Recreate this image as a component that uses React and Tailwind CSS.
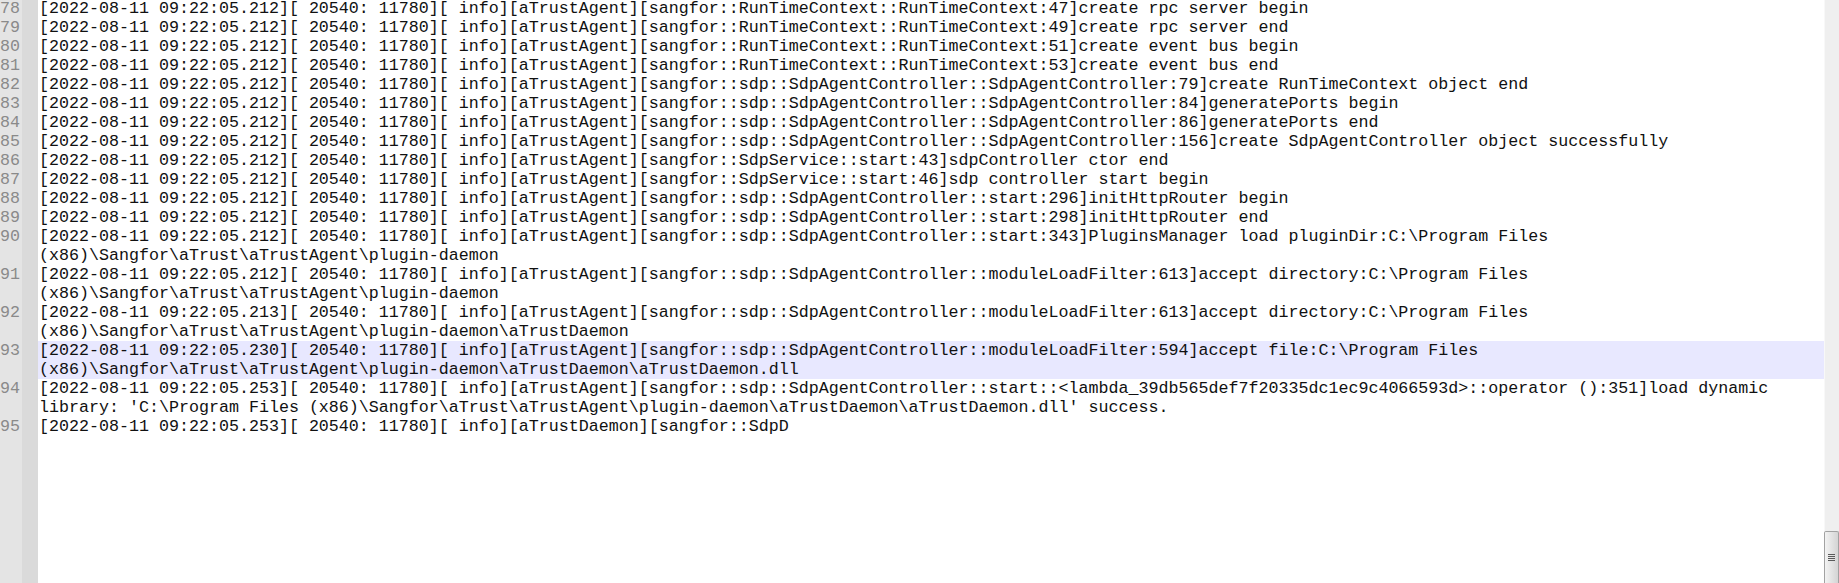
import React from "react";

const P = "[2022-08-11 09:22:05.";
const T = "][ 20540: 11780][ info][aTrustAgent]";

const lines = [
  { n: 78, rows: [P + "212" + T + "[sangfor::RunTimeContext::RunTimeContext:47]create rpc server begin"] },
  { n: 79, rows: [P + "212" + T + "[sangfor::RunTimeContext::RunTimeContext:49]create rpc server end"] },
  { n: 80, rows: [P + "212" + T + "[sangfor::RunTimeContext::RunTimeContext:51]create event bus begin"] },
  { n: 81, rows: [P + "212" + T + "[sangfor::RunTimeContext::RunTimeContext:53]create event bus end"] },
  { n: 82, rows: [P + "212" + T + "[sangfor::sdp::SdpAgentController::SdpAgentController:79]create RunTimeContext object end"] },
  { n: 83, rows: [P + "212" + T + "[sangfor::sdp::SdpAgentController::SdpAgentController:84]generatePorts begin"] },
  { n: 84, rows: [P + "212" + T + "[sangfor::sdp::SdpAgentController::SdpAgentController:86]generatePorts end"] },
  { n: 85, rows: [P + "212" + T + "[sangfor::sdp::SdpAgentController::SdpAgentController:156]create SdpAgentController object successfully"] },
  { n: 86, rows: [P + "212" + T + "[sangfor::SdpService::start:43]sdpController ctor end"] },
  { n: 87, rows: [P + "212" + T + "[sangfor::SdpService::start:46]sdp controller start begin"] },
  { n: 88, rows: [P + "212" + T + "[sangfor::sdp::SdpAgentController::start:296]initHttpRouter begin"] },
  { n: 89, rows: [P + "212" + T + "[sangfor::sdp::SdpAgentController::start:298]initHttpRouter end"] },
  {
    n: 90,
    rows: [
      P + "212" + T + "[sangfor::sdp::SdpAgentController::start:343]PluginsManager load pluginDir:C:\\Program Files",
      "(x86)\\Sangfor\\aTrust\\aTrustAgent\\plugin-daemon",
    ],
  },
  {
    n: 91,
    rows: [
      P + "212" + T + "[sangfor::sdp::SdpAgentController::moduleLoadFilter:613]accept directory:C:\\Program Files",
      "(x86)\\Sangfor\\aTrust\\aTrustAgent\\plugin-daemon",
    ],
  },
  {
    n: 92,
    rows: [
      P + "213" + T + "[sangfor::sdp::SdpAgentController::moduleLoadFilter:613]accept directory:C:\\Program Files",
      "(x86)\\Sangfor\\aTrust\\aTrustAgent\\plugin-daemon\\aTrustDaemon",
    ],
  },
  {
    n: 93,
    hl: true,
    rows: [
      P + "230" + T + "[sangfor::sdp::SdpAgentController::moduleLoadFilter:594]accept file:C:\\Program Files",
      "(x86)\\Sangfor\\aTrust\\aTrustAgent\\plugin-daemon\\aTrustDaemon\\aTrustDaemon.dll",
    ],
  },
  {
    n: 94,
    rows: [
      P + "253" + T + "[sangfor::sdp::SdpAgentController::start::<lambda_39db565def7f20335dc1ec9c4066593d>::operator ():351]load dynamic",
      "library: 'C:\\Program Files (x86)\\Sangfor\\aTrust\\aTrustAgent\\plugin-daemon\\aTrustDaemon\\aTrustDaemon.dll' success.",
    ],
  },
  { n: 95, rows: [P + "253" + "][ 20540: 11780][ info][aTrustDaemon][sangfor::SdpD"] },
];

export default function App() {
  return (
    <div
      className="flex h-[583px] w-full overflow-hidden bg-white text-[16.67px] leading-[19px]"
      style={{ fontFamily: '"Courier New", "Nimbus Mono PS", "FreeMono", "Liberation Mono", monospace' }}
    >
      <div className="flex min-w-0 flex-1 flex-col">
        <div className="-mt-px flex flex-col">
          {lines.map((l) => (
            <div key={l.n} className="flex">
              <div className="w-[22px] shrink-0 bg-[#e4e4e4] text-right text-[#8a8a8a]">
                <div className="h-[19px] whitespace-pre pr-[3px]">{String(l.n)}</div>
              </div>
              <div className="w-[16px] shrink-0 bg-[#dadada]" />
              <div className={"flex min-w-0 flex-1 flex-col pl-[1px] text-[#111111] " + (l.hl ? "bg-[#e8e8ff]" : "bg-white")}>
                {l.rows.map((r, i) => (
                  <div key={i} className="h-[19px] overflow-hidden whitespace-pre">
                    {r}
                  </div>
                ))}
              </div>
            </div>
          ))}
        </div>
        <div className="flex flex-1">
          <div className="w-[22px] shrink-0 bg-[#e4e4e4]" />
          <div className="w-[16px] shrink-0 bg-[#dadada]" />
          <div className="flex-1 bg-white" />
        </div>
      </div>
      <div className="flex w-[15px] shrink-0 flex-col">
        <div className="flex-1 border-l border-[#f8f8f8] bg-[#efefef]" />
        <div className="flex h-[52px] items-center justify-center rounded-t-[2px] border border-b-0 border-[#a2a2a2] bg-linear-to-r from-[#f3f3f3] to-[#d4d4d4]">
          <div className="flex flex-col gap-[1px]">
            <div className="h-px w-[7px] bg-[#5a5a5a]" />
            <div className="h-px w-[7px] bg-[#5a5a5a]" />
            <div className="h-px w-[7px] bg-[#5a5a5a]" />
            <div className="h-px w-[7px] bg-[#5a5a5a]" />
          </div>
        </div>
      </div>
    </div>
  );
}
